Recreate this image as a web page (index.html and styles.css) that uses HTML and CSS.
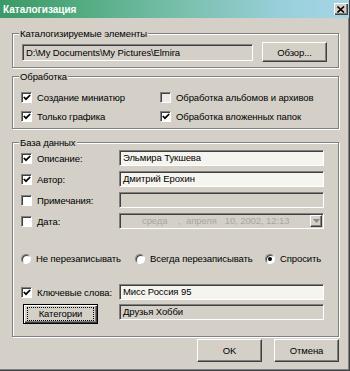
FILE: index.html
```html
<!DOCTYPE html>
<html lang="ru">
<head>
<meta charset="utf-8">
<title>Каталогизация</title>
<link rel="stylesheet" href="styles.css">
</head>
<body>
<div class="window">
  <div class="titlebar">
    <span class="title">Каталогизация</span>
    <span class="close"><svg width="8" height="7" viewBox="0 0 8 7"><path d="M0.5 0.5 L7 6.5 M7 0.5 L0.5 6.5" stroke="#000" stroke-width="1.6"/></svg></span>
  </div>
  <div class="body">
    <div class="group g1">
      <span class="legend">Каталогизируемые элементы</span>
      <div class="g1-row">
        <div class="field path">D:\My Documents\My Pictures\Elmira</div>
        <div class="btn browse">Обзор...</div>
      </div>
    </div>

    <div class="group g2">
      <span class="legend">Обработка</span>
      <div class="g2-grid">
        <label class="chk"><span class="box on"><svg width="8" height="7" viewBox="0 0 8 7"><polyline points="0.8,3 3,5.2 7.2,1" fill="none" stroke="#000" stroke-width="1.7"/></svg></span>Создание миниатюр</label>
        <label class="chk"><span class="box dim"></span>Обработка альбомов и архивов</label>
        <label class="chk"><span class="box on"><svg width="8" height="7" viewBox="0 0 8 7"><polyline points="0.8,3 3,5.2 7.2,1" fill="none" stroke="#000" stroke-width="1.7"/></svg></span>Только графика</label>
        <label class="chk"><span class="box on"><svg width="8" height="7" viewBox="0 0 8 7"><polyline points="0.8,3 3,5.2 7.2,1" fill="none" stroke="#000" stroke-width="1.7"/></svg></span>Обработка вложенных папок</label>
      </div>
    </div>

    <div class="group g3">
      <span class="legend">База данных</span>
      <div class="frow">
        <label class="chk lbl"><span class="box on"><svg width="8" height="7" viewBox="0 0 8 7"><polyline points="0.8,3 3,5.2 7.2,1" fill="none" stroke="#000" stroke-width="1.7"/></svg></span>Описание:</label>
        <div class="field input">Эльмира Тукшева</div>
      </div>
      <div class="frow">
        <label class="chk lbl"><span class="box on"><svg width="8" height="7" viewBox="0 0 8 7"><polyline points="0.8,3 3,5.2 7.2,1" fill="none" stroke="#000" stroke-width="1.7"/></svg></span>Автор:</label>
        <div class="field input">Дмитрий Ерохин</div>
      </div>
      <div class="frow">
        <label class="chk lbl"><span class="box"></span>Примечания:</label>
        <div class="field input disabled"></div>
      </div>
      <div class="frow">
        <label class="chk lbl"><span class="box"></span>Дата:</label>
        <div class="field combo">
          <span class="d-day">среда</span><span class="d-comma">,</span><span class="d-month">апреля</span><span class="d-rest">10, 2002, 12:13</span>
          <span class="dd"><svg width="7" height="4" viewBox="0 0 7 4"><path d="M0 0 H7 L3.5 4 Z" fill="#8a8a8a"/></svg></span>
        </div>
      </div>
      <div class="rrow">
        <label class="rad r1"><span class="circle"></span>Не перезаписывать</label>
        <label class="rad r2"><span class="circle"></span>Всегда перезаписывать</label>
        <label class="rad"><span class="circle sel"></span>Спросить</label>
      </div>
      <div class="frow kw">
        <label class="chk lbl"><span class="box on"><svg width="8" height="7" viewBox="0 0 8 7"><polyline points="0.8,3 3,5.2 7.2,1" fill="none" stroke="#000" stroke-width="1.7"/></svg></span>Ключевые слова:</label>
        <div class="field input">Мисс Россия 95</div>
      </div>
      <div class="crow">
        <div class="btn cat"><span class="focus">Категории</span></div>
        <div class="field input disabled">Друзья Хобби</div>
      </div>
    </div>

    <div class="footer">
      <div class="btn fbtn">OK</div>
      <div class="btn fbtn">Отмена</div>
    </div>
  </div>
</div>
</body>
</html>
```

FILE: styles.css
```css
html, body {
  margin: 0;
  padding: 0;
  background: #d4d0c8;
}
body {
  font-family: "Liberation Sans", Arial, sans-serif;
  font-size: 9.5px;
  letter-spacing: -0.1px;
  color: #000;
}
.window {
  width: 350px;
  height: 371px;
  box-sizing: border-box;
  background: #d4d0c8;
  border-right: 1px solid #404040;
  border-bottom: 1px solid #404040;
  box-shadow: inset -1px -1px 0 #808080;
  display: flex;
  flex-direction: column;
}
.titlebar {
  height: 18px;
  flex: none;
  display: flex;
  align-items: center;
  justify-content: space-between;
  padding: 0 1px 0 3px;
  background: linear-gradient(90deg, #3a9866 0%, #55ad84 25%, #7dc1b0 55%, #98cfda 80%, #a6d5e6 100%);
}
.title {
  color: #fff;
  font-weight: bold;
  font-size: 10px;
  letter-spacing: 0;
}
.close {
  width: 14px;
  height: 12px;
  box-sizing: border-box;
  background: #d4d0c8;
  box-shadow: inset 1px 1px 0 #fff, inset -1px -1px 0 #404040, inset -2px -2px 0 #808080;
  display: flex;
  align-items: center;
  justify-content: center;
}
.body {
  flex: 1;
  padding: 15px 10px 0 12px;
  display: flex;
  flex-direction: column;
}
.group {
  position: relative;
  box-sizing: border-box;
  border: 1px solid #808080;
  box-shadow: 1px 1px 0 #fff, inset 1px 1px 0 #fff;
}
.legend {
  position: absolute;
  top: -7px;
  left: 6px;
  padding: 0 1px;
  background: #d4d0c8;
  line-height: 13px;
}
.g1 {
  height: 35px;
  padding: 8px 10px 0 9px;
}
.g1-row {
  display: flex;
  align-items: center;
  gap: 9px;
}
.field {
  box-sizing: border-box;
  height: 16px;
  border-style: solid;
  border-width: 1px;
  border-color: #808080 #fff #fff #808080;
  box-shadow: inset 1px 1px 0 #404040;
  padding: 0 3px;
  line-height: 14px;
  white-space: nowrap;
  overflow: hidden;
}
.path {
  width: 231px;
  height: 17px;
  line-height: 15px;
  background: #d4d0c8;
}
.btn {
  box-sizing: border-box;
  background: #d4d0c8;
  border-style: solid;
  border-width: 1px;
  border-color: #fff #404040 #404040 #fff;
  box-shadow: inset -1px -1px 0 #808080;
  display: flex;
  align-items: center;
  justify-content: center;
}
.browse {
  width: 65px;
  height: 20px;
}
.g2 {
  margin-top: 8px;
  height: 53px;
  padding: 14px 0 0 8px;
}
.g2-grid {
  display: grid;
  grid-template-columns: 139px 1fr;
  row-gap: 6px;
}
.chk {
  display: flex;
  align-items: center;
  height: 13px;
  white-space: nowrap;
}
.box {
  width: 11px;
  height: 11px;
  box-sizing: border-box;
  flex: none;
  margin-right: 5px;
  background: #fff;
  border-style: solid;
  border-width: 1px;
  border-color: #808080 #fff #fff #808080;
  box-shadow: inset 1px 1px 0 #404040;
  display: flex;
  align-items: center;
  justify-content: center;
}
.box.dim {
  background: #eceae4;
}
.g3 {
  margin-top: 13px;
  height: 195px;
  padding: 7px 0 0 8px;
  display: flex;
  flex-direction: column;
}
.frow {
  display: flex;
  align-items: center;
  height: 16px;
  margin-bottom: 5px;
}
.lbl {
  width: 98px;
}
.input {
  width: 205px;
  background: #f6f4ee;
}
.input.disabled {
  background: #d4d0c8;
}
.combo {
  width: 205px;
  background: #d4d0c8;
  color: #a8a6a0;
  display: flex;
  align-items: center;
  padding: 0 1px 0 22px;
  height: 16px;
}
.d-day { width: 36px; flex: none; }
.d-comma { width: 8px; flex: none; }
.d-month { flex: none; margin-right: 8px; }
.d-rest { flex: 1; }
.dd {
  width: 12px;
  height: 12px;
  box-sizing: border-box;
  background: #d4d0c8;
  border-style: solid;
  border-width: 1px;
  border-color: #fff #404040 #404040 #fff;
  box-shadow: inset -1px -1px 0 #808080;
  display: flex;
  align-items: center;
  justify-content: center;
}
.rrow {
  display: flex;
  align-items: center;
  height: 13px;
  margin-top: 18px;
}
.rad {
  display: flex;
  align-items: center;
  white-space: nowrap;
}
.r1 { width: 114px; }
.r2 { width: 130px; }
.circle {
  width: 10px;
  height: 10px;
  box-sizing: border-box;
  flex: none;
  margin-right: 5px;
  border-radius: 50%;
  background: #fff;
  border: 1px solid;
  border-color: #808080 #fff #fff #808080;
  box-shadow: inset 1px 1px 0 #404040;
  display: flex;
  align-items: center;
  justify-content: center;
}
.circle.sel::after {
  content: "";
  width: 4px;
  height: 4px;
  border-radius: 50%;
  background: #000;
}
.kw {
  margin-top: 19px;
  margin-bottom: 4px;
}
.crow {
  display: flex;
  align-items: flex-start;
}
.cat {
  width: 75px;
  height: 20px;
  margin: 0 21px 0 2px;
  border: 1px solid #000;
  box-shadow: inset 1px 1px 0 #fff, inset -1px -1px 0 #404040, inset -2px -2px 0 #808080;
}
.focus {
  box-sizing: border-box;
  width: 67px;
  height: 14px;
  line-height: 12px;
  text-align: center;
  border: 1px dotted #000;
}
.footer {
  display: flex;
  justify-content: flex-end;
  gap: 12px;
  margin-top: 2px;
  padding-right: 0;
}
.fbtn {
  width: 65px;
  height: 23px;
}
```
